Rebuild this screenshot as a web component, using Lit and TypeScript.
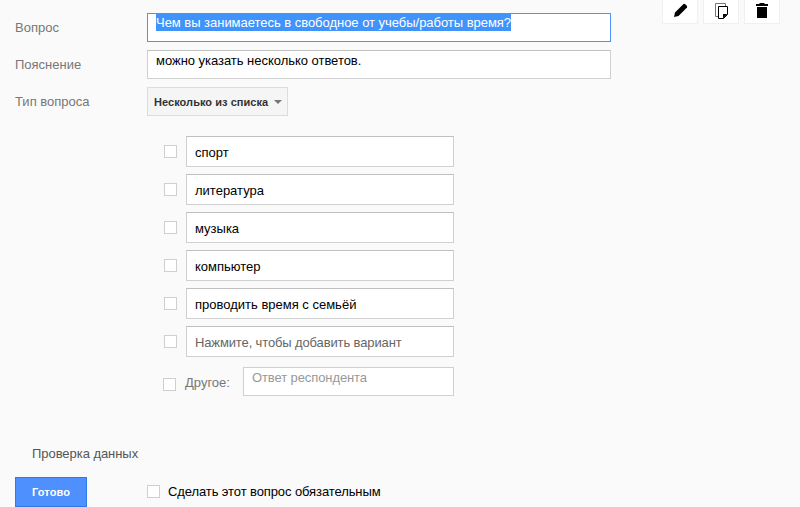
import { LitElement, html, css } from "lit";
import { customElement } from "lit/decorators.js";

const options = ["спорт", "литература", "музыка", "компьютер", "проводить время с семьёй"];

@customElement("app-root")
export class AppRoot extends LitElement {
  static styles = css`
    :host {
      display: block;
      width: 800px;
      height: 507px;
      overflow: hidden;
      background: #fafafa;
      font-family: "Liberation Sans", Arial, sans-serif;
      font-size: 13px;
      color: #000;
    }
    .top { display: flex; align-items: flex-start; }
    .main { width: 611px; padding-top: 13px; flex: none; }
    .toolbar { display: flex; gap: 5px; margin-left: 51px; }
    .tool {
      width: 36px; height: 24px; box-sizing: border-box;
      background: #fff; border: 1px solid #f0f0f0; border-top: 0;
    }
    .tool svg { display: block; }
    .row { display: grid; grid-template-columns: 132px 464px; padding-left: 15px; margin-bottom: 8px; }
    .label { color: #777; line-height: 29px; height: 29px; box-sizing: border-box; }
    .field {
      height: 29px; box-sizing: border-box; background: #fff;
      border: 1px solid #d0d0d0; border-top-color: #c0c0c0;
      padding: 2px 8px 0; line-height: 15px; white-space: nowrap; overflow: hidden;
      letter-spacing: -0.03px;
    }
    .field.focus { border-color: #4d90fe; padding-top: 1px; }
    .sel { background: #3f93fb; color: #fff; padding: 1px 0; }
    .dropdown {
      width: 141px; height: 29px; box-sizing: border-box;
      background: #f5f5f5; border: 1px solid #dcdcdc;
      display: flex; align-items: center; padding-left: 6px;
      font-size: 11px; font-weight: bold; color: #333; letter-spacing: 0.05px;
    }
    .caret {
      margin-left: 6px; margin-top: 1px; width: 0; height: 0;
      border-left: 4.5px solid transparent; border-right: 4.5px solid transparent;
      border-top: 4.5px solid #777;
    }
    .options { padding-left: 164px; padding-top: 12px; width: 290px; }
    .opt { display: flex; align-items: center; height: 31px; margin-bottom: 7px; }
    .cb {
      width: 11px; height: 11px; flex: none; background: #fff;
      border: 1px solid #cfcfcf; box-sizing: content-box;
    }
    .opt .cb { margin-right: 9px; }
    .box {
      flex: 1; height: 31px; box-sizing: border-box; background: #fff;
      border: 1px solid #d0d0d0; border-top-color: #c0c0c0;
      padding: 1px 0 0 8px; line-height: 29px; white-space: nowrap;
    }
    .box.ph { color: #666; letter-spacing: -0.13px; }
    .other { display: flex; align-items: center; height: 29px; margin-left: -1px; margin-top: 10px; }
    .other .cb { margin-top: 6px; }
    .other .lbl { color: #777; margin-left: 9px; width: 58px; margin-top: 2px; }
    .other .inp {
      flex: 1; height: 29px; box-sizing: border-box; background: #fff;
      border: 1px solid #d0d0d0; padding: 2px 8px; line-height: 15px; color: #999;
      letter-spacing: -0.1px;
    }
    .validate { margin-top: 50px; padding-left: 32px; color: #555; line-height: 15px; letter-spacing: -0.05px; }
    .bottom { display: flex; align-items: center; margin-top: 16px; padding-left: 15px; }
    .done {
      width: 72px; height: 30px; box-sizing: border-box; background: #4d90fe;
      border: 1px solid #3079ed; color: #fff; font-size: 11px; font-weight: bold;
      display: flex; align-items: center; justify-content: center; letter-spacing: 0.1px;
    }
    .req { display: flex; align-items: center; margin-left: 60px; margin-top: -2px; letter-spacing: -0.1px; }
    .req .cb { margin-right: 8px; }
  `;

  render() {
    return html`
      <div class="top">
        <div class="main">
          <div class="row">
            <div class="label">Вопрос</div>
            <div class="field focus"><span class="sel">Чем вы занимаетесь в свободное от учебы/работы время?</span></div>
          </div>
          <div class="row">
            <div class="label">Пояснение</div>
            <div class="field">можно указать несколько ответов.</div>
          </div>
          <div class="row">
            <div class="label">Тип вопроса</div>
            <div class="dropdown">Несколько из списка<span class="caret"></span></div>
          </div>
        </div>
        <div class="toolbar">
          <div class="tool">
            <svg width="34" height="23" viewBox="0 0 34 23"><path d="M11 17L12 12.500L20.500 4Q21.500 3.500 22.500 4.500L23.500 5.500Q24.500 6.500 24 7.500L15.500 16Z" fill="#000"/></svg>
          </div>
          <div class="tool">
            <svg width="34" height="23" viewBox="0 0 34 23"><path d="M21.500 6V3.500H11.500V16.500H14" fill="none" stroke="#777"/><path d="M14.500 6.500H23.500V14.500L19.500 18.500H14.500Z" fill="#fff" stroke="#000"/><path d="M23.500 14L19 18.500V14Z" fill="#000"/></svg>
          </div>
          <div class="tool">
            <svg width="34" height="23" viewBox="0 0 34 23"><path d="M14.500 3H19.500V4H23V6H11V4H14.500ZM12 7H22V18H12Z" fill="#000"/></svg>
          </div>
        </div>
      </div>
      <div class="options">
        ${options.map((o) => html`<div class="opt"><span class="cb"></span><div class="box">${o}</div></div>`)}
        <div class="opt"><span class="cb"></span><div class="box ph">Нажмите, чтобы добавить вариант</div></div>
        <div class="other"><span class="cb"></span><span class="lbl">Другое:</span><div class="inp">Ответ респондента</div></div>
      </div>
      <div class="validate">Проверка данных</div>
      <div class="bottom">
        <div class="done">Готово</div>
        <div class="req"><span class="cb"></span>Сделать этот вопрос обязательным</div>
      </div>
    `;
  }
}
